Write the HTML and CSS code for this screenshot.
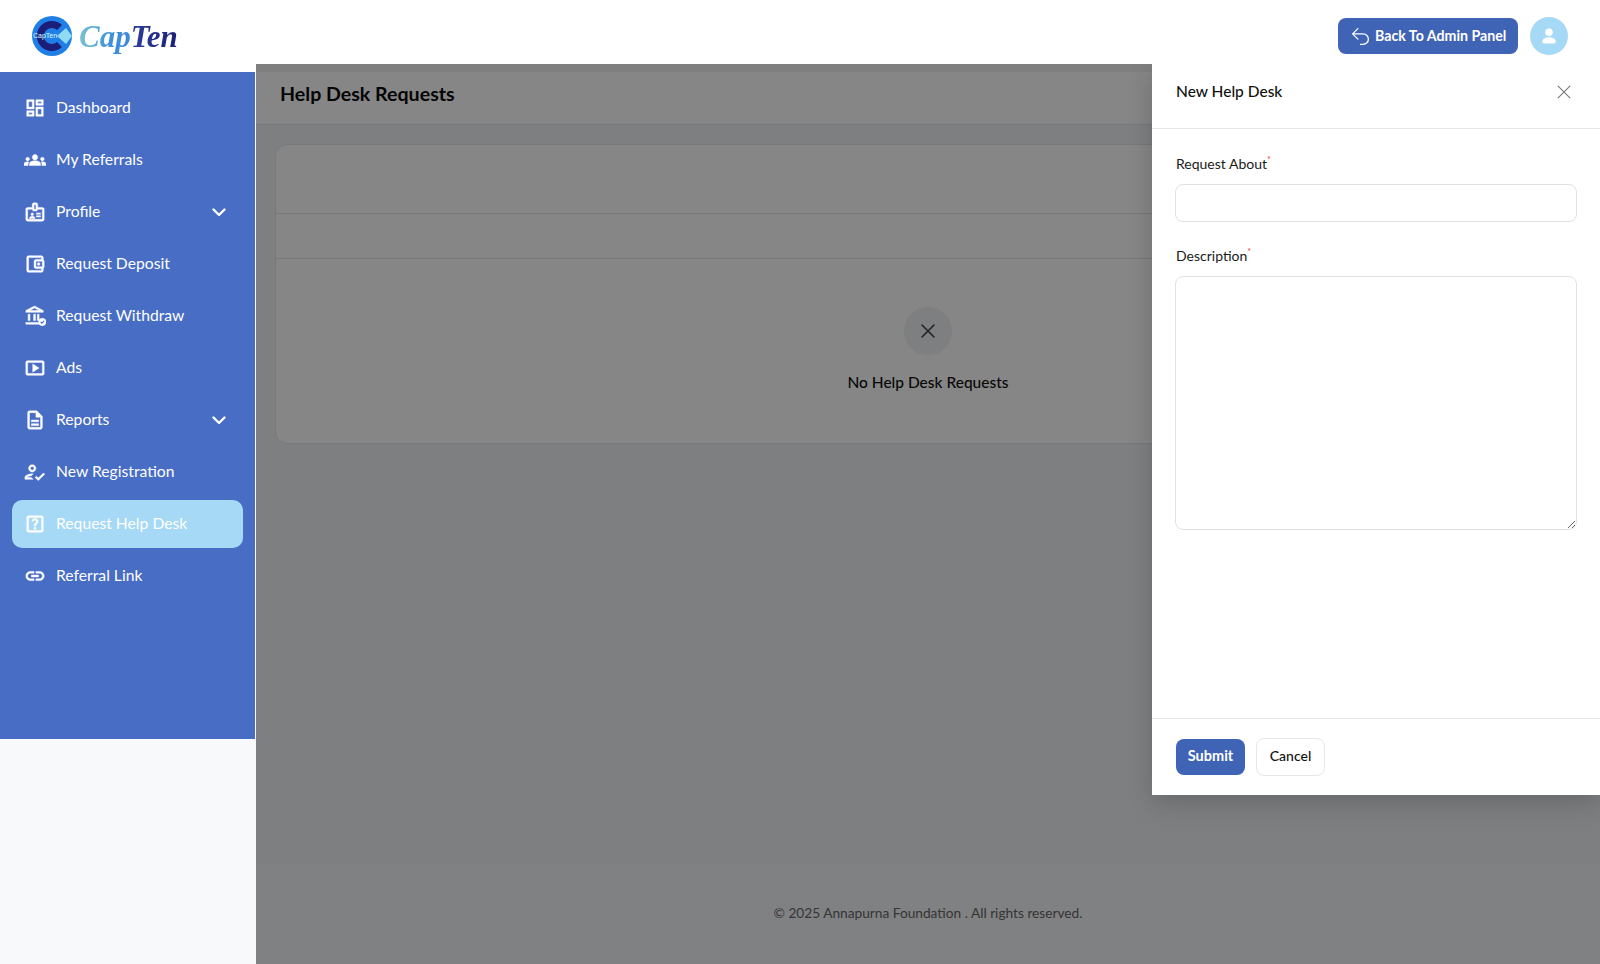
FILE: index.html
```html
<!DOCTYPE html>
<html lang="en">
<head>
<meta charset="utf-8">
<title>Help Desk Requests</title>
<link rel="stylesheet" href="styles.css">
</head>
<body>
<div class="app">
  <aside class="sidebar">
    <div class="brand">
      <svg class="brand-mark" viewBox="0 0 40 40" aria-hidden="true">
        <circle cx="20" cy="20" r="20" fill="#1f7fe6"/>
        <path d="M30 9a15 15 0 1 0 0 22l-5-5a8 8 0 1 1 0-12z" fill="#1c1f78"/>
        <path d="M34 12l-9 8 9 8 6-8z" fill="#8fdcf2"/>
        <text x="1" y="22" class="brand-mini">CapTen</text>
      </svg>
      <span class="brand-name"><span class="brand-cap">Cap</span><span class="brand-ten">Ten</span></span>
    </div>
    <nav class="nav">
      <a class="nav-item"><svg class="nav-icon" viewBox="0 0 24 24"><path d="M19 5v2h-4V5h4M9 5v6H5V5h4m10 8v6h-4v-6h4M9 17v2H5v-2h4M21 3h-8v6h8V3zM11 3H3v10h8V3zm10 8h-8v10h8V11zm-10 4H3v6h8v-6z"/></svg><span class="nav-label">Dashboard</span></a>
      <a class="nav-item"><svg class="nav-icon" viewBox="0 0 24 24"><path d="M12 12.75c1.63 0 3.07.39 4.24.9 1.08.48 1.76 1.56 1.76 2.73V18H6v-1.61c0-1.18.68-2.26 1.76-2.73 1.17-.52 2.61-.91 4.24-.91zM4 13c1.1 0 2-.9 2-2s-.9-2-2-2-2 .9-2 2 .9 2 2 2zm1.13 1.1c-.37-.06-.74-.1-1.13-.1-.99 0-1.93.21-2.78.58C.48 14.9 0 15.62 0 16.43V18h4.5v-1.61c0-.83.23-1.61.63-2.29zM20 13c1.1 0 2-.9 2-2s-.9-2-2-2-2 .9-2 2 .9 2 2 2zm4 3.43c0-.81-.48-1.53-1.22-1.85-.85-.37-1.79-.58-2.78-.58-.39 0-.76.04-1.13.1.4.68.63 1.46.63 2.29V18H24v-1.57zM12 6c1.66 0 3 1.34 3 3s-1.34 3-3 3-3-1.34-3-3 1.34-3 3-3z"/></svg><span class="nav-label">My Referrals</span></a>
      <a class="nav-item"><svg class="nav-icon" viewBox="0 0 24 24"><path d="M20 7h-5V4c0-1.1-.9-2-2-2h-2c-1.1 0-2 .9-2 2v3H4c-1.1 0-2 .9-2 2v11c0 1.1.9 2 2 2h16c1.1 0 2-.9 2-2V9c0-1.1-.9-2-2-2zM11 4h2v5h-2V4zm9 16H4V9h5c0 1.1.9 2 2 2h2c1.1 0 2-.9 2-2h5v11zm-11-4c.83 0 1.5-.67 1.5-1.5S9.83 13 9 13s-1.5.67-1.5 1.5S8.17 16 9 16zm2.08 1.18c-.64-.28-1.35-.43-2.08-.43s-1.44.15-2.08.43c-.56.24-.92.78-.92 1.39V19h6v-.43c0-.61-.36-1.15-.92-1.39zM13.5 13H18v1.5h-4.5zm0 3H18v1.5h-4.5z"/></svg><span class="nav-label">Profile</span><svg class="nav-chevron" viewBox="0 0 14 9"><path d="M1.500 1.500 7 7l5.500-5.500"/></svg></a>
      <a class="nav-item"><svg class="nav-icon" viewBox="0 0 24 24"><path d="M21 7.280V5c0-1.100-.9-2-2-2H5c-1.110 0-2 .9-2 2v14c0 1.100.89 2 2 2h14c1.100 0 2-.9 2-2v-2.280c.59-.35 1-.98 1-1.720V9c0-.74-.41-1.370-1-1.720zM20 9v6h-7V9h7zM5 19V5h14v2h-6c-1.100 0-2 .9-2 2v6c0 1.100.9 2 2 2h6v2H5z"/><circle cx="16" cy="12" r="1.500"/></svg><span class="nav-label">Request Deposit</span></a>
      <a class="nav-item"><svg class="nav-icon" viewBox="0 0 24 24"><path d="M6.500 10h-2v7h2v-7zm6 0h-2v7h2v-7zm5 9H2v2h15.500v-2zm-1-9h-2v7h2v-7zm-5-6.740L16.710 6H6.290l5.210-2.740m0-2.260L2 6v2h19V6l-9.500-5z"/><circle cx="20" cy="18.500" r="4"/><path class="nav-check" d="m18.200 18.500 1.300 1.300 2.400-2.500"/></svg><span class="nav-label">Request Withdraw</span></a>
      <a class="nav-item"><svg class="nav-icon" viewBox="0 0 24 24"><path d="M9.500 7.500v9l7-4.500zM20 4H4c-1.100 0-2 .9-2 2v12c0 1.100.9 2 2 2h16c1.100 0 2-.9 2-2V6c0-1.100-.9-2-2-2zm0 14H4V6h16v12z"/></svg><span class="nav-label">Ads</span></a>
      <a class="nav-item"><svg class="nav-icon" viewBox="0 0 24 24"><path d="M8 16h8v2H8zm0-4h8v2H8zm6-10H6c-1.100 0-2 .9-2 2v16c0 1.100.89 2 1.990 2H18c1.100 0 2-.9 2-2V8l-6-6zm4 18H6V4h7v5h5v11z"/></svg><span class="nav-label">Reports</span><svg class="nav-chevron" viewBox="0 0 14 9"><path d="M1.500 1.500 7 7l5.500-5.500"/></svg></a>
      <a class="nav-item"><svg class="nav-icon" viewBox="0 0 24 24"><path d="M9 12c2.210 0 4-1.790 4-4s-1.790-4-4-4-4 1.790-4 4 1.790 4 4 4zm0-6c1.100 0 2 .9 2 2s-.9 2-2 2-2-.9-2-2 .9-2 2-2zM3 18c.2-.63 2.570-1.680 4.960-1.940l2.040-2c-.39-.04-.68-.06-1-.06-2.670 0-8 1.340-8 4v2h9l-2-2H3zm12.600.6-2.100-2.100-1.400 1.400 3.500 3.500 7-7-1.400-1.400z"/></svg><span class="nav-label">New Registration</span></a>
      <a class="nav-item is-active"><svg class="nav-icon" viewBox="0 0 24 24"><path d="M19 3H5c-1.100 0-2 .9-2 2v14c0 1.100.9 2 2 2h14c1.100 0 2-.9 2-2V5c0-1.100-.9-2-2-2zm0 16H5V5h14v14z"/><path d="M12.010 18c-.7 0-1.260-.56-1.260-1.260 0-.71.56-1.250 1.260-1.250.71 0 1.250.54 1.250 1.250-.01.69-.54 1.260-1.250 1.260zm3-7.400c-.76 1.110-1.480 1.460-1.870 2.170-.16.29-.22.48-.22 1.410h-1.820c0-.49-.08-1.290.31-1.980.49-.87 1.420-1.390 1.960-2.160.57-.81.25-2.330-1.370-2.330-1.060 0-1.580.8-1.800 1.480l-1.650-.7C9.010 7.150 10.250 6 11.990 6c1.450 0 2.450.66 2.950 1.490.43.7.68 2.010.07 3.110z"/></svg><span class="nav-label">Request Help Desk</span></a>
      <a class="nav-item"><svg class="nav-icon" viewBox="0 0 24 24"><path d="M3.900 12c0-1.710 1.390-3.100 3.100-3.100h4V7H7c-2.760 0-5 2.240-5 5s2.240 5 5 5h4v-1.900H7c-1.710 0-3.100-1.390-3.100-3.100zM8 13h8v-2H8v2zm9-6h-4v1.900h4c1.710 0 3.100 1.390 3.100 3.100s-1.390 3.100-3.100 3.100h-4V17h4c2.760 0 5-2.240 5-5s-2.240-5-5-5z"/></svg><span class="nav-label">Referral Link</span></a>
    </nav>
  </aside>

  <div class="main">
    <header class="topbar">
      <a class="back-btn">
        <svg class="back-icon" viewBox="0 0 24 24"><path d="M9 15 3 9m0 0 6-6M3 9h12a6 6 0 0 1 0 12h-3"/></svg>
        <span class="back-label">Back To Admin Panel</span>
      </a>
      <span class="avatar">
        <svg class="avatar-icon" viewBox="0 0 24 24"><circle cx="12" cy="7.500" r="4.500"/><path d="M12 13.500c-4.500 0-8 2.300-8 5 0 1.600 1.400 2.500 3 2.500h10c1.600 0 3-.9 3-2.500 0-2.700-3.500-5-8-5z"/></svg>
      </span>
    </header>
    <div class="page-title"><h1>Help Desk Requests</h1></div>
    <section class="content">
      <div class="card">
        <div class="card-head"></div>
        <div class="card-row"></div>
        <div class="empty">
          <span class="empty-icon"><svg viewBox="0 0 24 24"><path d="M6 6l12 12M18 6 6 18"/></svg></span>
          <p>No Help Desk Requests</p>
        </div>
      </div>
    </section>
    <footer class="footer">© 2025 Annapurna Foundation . All rights reserved.</footer>

    <div class="overlay"></div>
    <aside class="panel">
      <div class="panel-head">
        <h2>New Help Desk</h2>
        <svg class="panel-close" viewBox="0 0 16 16"><path d="M1 1l14 14M15 1 1 15"/></svg>
      </div>
      <form class="panel-body">
        <label class="field-label">Request About<sup>*</sup></label>
        <input class="field-input" type="text">
        <label class="field-label">Description<sup>*</sup></label>
        <textarea class="field-area"></textarea>
      </form>
      <div class="panel-foot">
        <button class="btn btn-primary" type="button">Submit</button>
        <button class="btn btn-light" type="button">Cancel</button>
      </div>
    </aside>
  </div>
</div>
</body>
</html>
```
FILE: styles.css
```css
* { box-sizing: border-box; }
html, body { margin: 0; height: 100%; }
body {
  font-family: "Lato", "Liberation Sans", sans-serif;
  color: #111;
  background: #f8f9fb;
  overflow: hidden;
}
a { text-decoration: none; color: inherit; }
h1, h2, p { margin: 0; }

.app { display: grid; grid-template-columns: 256px 1fr; height: 964px; }

.sidebar { position: relative; z-index: 3; background: #f8f9fb; display: flex; flex-direction: column; }
.brand { height: 72px; background: #fff; display: flex; align-items: center; gap: 7px; padding: 0 0 1px 32px; }
.brand-mark { width: 40px; height: 40px; flex: none; }
.brand-mini { font: 7px "Liberation Sans", sans-serif; fill: #dff; }
.brand-name { font: italic 700 31px "Liberation Serif", serif; padding-top: 3px; }
.brand-cap { background: linear-gradient(90deg, #7cc3cf 0%, #3f93dc 55%, #3a86dc 100%); -webkit-background-clip: text; background-clip: text; color: transparent; }
.brand-ten { background: linear-gradient(90deg, #2d3f9c, #1c1f78); -webkit-background-clip: text; background-clip: text; color: transparent; }

.nav { width: 255px; height: 667px; background: #476dc5; padding: 12px 12px; display: flex; flex-direction: column; gap: 4px; }
.nav-item { height: 48px; display: flex; align-items: center; padding: 0 13px 0 11.5px; border-radius: 10px; color: #fff; font-size: 15.7px; }
.nav-item.is-active { background: #a5d9f5; }
.nav-icon { width: 22px; height: 22px; fill: #fff; stroke: #fff; stroke-width: .5; flex: none; margin-right: 10.5px; }
.nav-check { fill: none; stroke: #476dc5; stroke-width: 1.2; }
.nav-label { flex: 1; padding-bottom: 2px; }
.nav-chevron { width: 14px; height: 9px; fill: none; stroke: #fff; stroke-width: 2.4; stroke-linecap: round; stroke-linejoin: round; flex: none; margin-right: 4px; }

.main { position: relative; display: flex; flex-direction: column; background: #eff1f5; min-width: 0; }
.topbar { height: 64px; flex: none; background: #fff; display: flex; align-items: center; justify-content: flex-end; gap: 12px; padding: 8px 32px 0 0; position: relative; z-index: 3; }
.back-btn { height: 36px; width: 180px; border-radius: 8px; background: #3f63b5; color: #fff; font-size: 14.2px; font-weight: 700; display: flex; align-items: center; gap: 4px; padding: 0 12px; white-space: nowrap; }
.back-label { padding-bottom: 2px; }
.back-icon { width: 21px; height: 21px; fill: none; stroke: #fff; stroke-width: 1.5; stroke-linecap: round; stroke-linejoin: round; flex: none; }
.avatar { width: 38px; height: 38px; border-radius: 50%; background: #a5d9f5; display: flex; align-items: center; justify-content: center; }
.avatar-icon { width: 20px; height: 20px; fill: #fff; }

.page-title { height: 61px; flex: none; background: #fff; border-bottom: 1px solid #e1e3e6; display: flex; align-items: center; padding: 0 24px 2px; box-shadow: inset 0 8px 0 #f2f2f2; }
.page-title h1 { font-size: 19.6px; font-weight: 700; color: #0a0a0a; }

.content { flex: 1; padding: 19px 19px 0; }
.card { height: 300px; background: #fff; border: 1px solid #e4e6ea; border-radius: 12px; display: flex; flex-direction: column; }
.card-head { height: 69px; border-bottom: 1px solid #e4e6ea; }
.card-row { height: 45px; border-bottom: 1px solid #e4e6ea; }
.empty { flex: 1; display: flex; flex-direction: column; align-items: center; padding-top: 48px; }
.empty-icon { width: 48px; height: 48px; border-radius: 50%; background: #f0f1f4; display: flex; align-items: center; justify-content: center; }
.empty-icon svg { width: 24px; height: 24px; fill: none; stroke: #444; stroke-width: 1.6; stroke-linecap: round; }
.empty p { margin-top: 18px; font-size: 15.5px; font-weight: 500; color: #111; }

.footer { height: 101px; flex: none; background: #f4f5f8; display: flex; align-items: center; justify-content: center; padding-bottom: 2px; font-size: 13.7px; color: #666; }

.overlay { position: absolute; inset: 64px 0 0 0; background: rgba(0, 0, 0, .475); z-index: 1; }

.panel { position: absolute; top: 64px; right: 0; width: 448px; height: 731px; background: #fff; z-index: 2; display: flex; flex-direction: column; box-shadow: 0 8px 24px rgba(0, 0, 0, .18); }
.panel-head { height: 65px; flex: none; border-bottom: 1px solid #e6e7ea; display: flex; align-items: center; justify-content: space-between; padding: 0 29px 9px 24px; }
.panel-head h2 { font-size: 15.5px; font-weight: 500; color: #111; padding-bottom: 1px; }
.panel-close { width: 14px; height: 14px; fill: none; stroke: #777; stroke-width: 1.3; }
.panel-body { flex: 1; display: flex; flex-direction: column; padding: 25px 23px 0; }
.field-label { font-size: 14px; color: #1a1a1a; line-height: 20px; padding-left: 1px; }
.field-label sup { color: #e23b3b; font-size: 9px; line-height: 0; }
.field-input { height: 38px; margin: 10px 0 24px; border: 1px solid #dfe1e5; border-radius: 8px; background: #fff; outline: 0; }
.field-area { height: 254px; margin-top: 10px; border: 1px solid #dfe1e5; border-radius: 8px; background: #fff; outline: 0; resize: vertical; }
.panel-foot { height: 77px; flex: none; border-top: 1px solid #e6e7ea; display: flex; align-items: center; gap: 11px; padding: 0 24px; }
.btn { height: 36px; width: 69px; border-radius: 8px; border: 0; font: 700 14.5px "Lato", "Liberation Sans", sans-serif; padding: 0 0 3px; }
.btn-primary { background: #3f63b5; color: #fff; }
.btn-light { height: 38px; background: #fff; color: #111; border: 1px solid #e4e6ea; font-weight: 500; font-size: 14px; }
```
